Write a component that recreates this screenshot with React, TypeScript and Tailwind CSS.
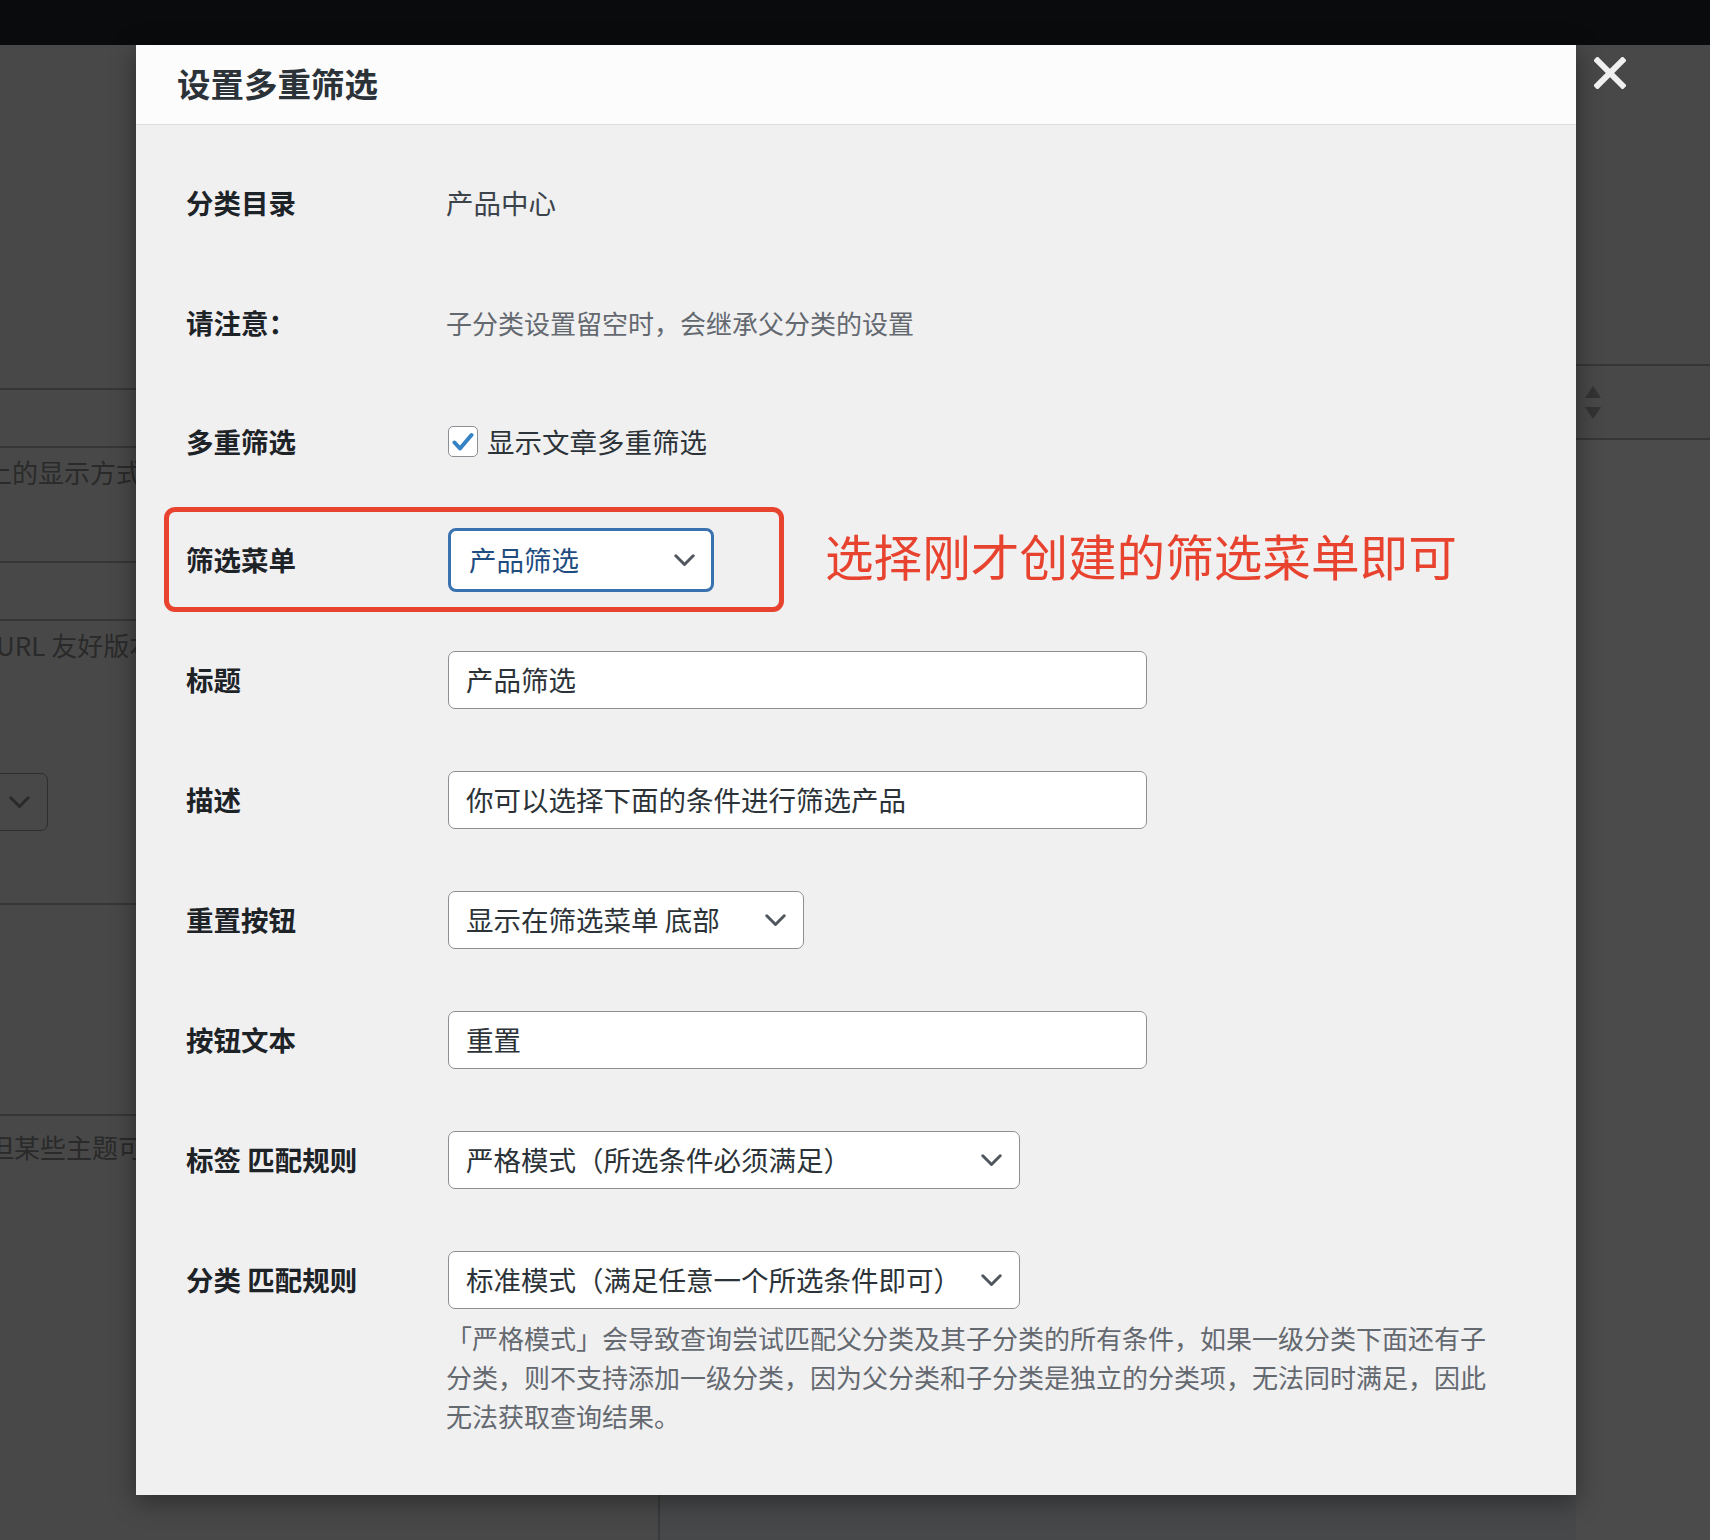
import React from 'react';

function Chevron() {
  return (
    <svg width="21" height="13" viewBox="0 0 21 13" className="shrink-0">
      <path d="M1.8 1.8 L10.5 10.5 L19.2 1.8" fill="none" stroke="#50575e" strokeWidth="3" strokeLinecap="round" strokeLinejoin="round" />
    </svg>
  );
}

function TextInput({ value }: { value: string }) {
  return (
    <div className="w-[699px] h-[58px] flex items-center pl-[17px] bg-white border-[1.5px] border-[#8c8f94] rounded-[7px] text-[27.5px] text-[#2c3338] leading-none">
      {value}
    </div>
  );
}

function Select({ value, width }: { value: string; width: string }) {
  return (
    <div className={`${width} h-[58px] flex items-center justify-between pl-[17px] pr-[17px] bg-white border-[1.5px] border-[#8c8f94] rounded-[7px] text-[27.5px] text-[#2c3338] leading-none`}>
      <span>{value}</span>
      <Chevron />
    </div>
  );
}

function Row({ label, children, h = 'h-[120px]' }: { label: string; children: React.ReactNode; h?: string }) {
  return (
    <div className={`${h} flex items-center px-[50px]`}>
      <div className="w-[262px] shrink-0 text-[27.5px] font-bold text-[#1d2327] leading-none">{label}</div>
      <div className="flex items-center">{children}</div>
    </div>
  );
}

function Line() {
  return <div className="h-[2px] bg-[#363636]" />;
}

export default function App() {
  return (
    <div className="relative w-[1710px] h-[1540px] overflow-hidden bg-[#484848] font-['Noto_Sans_CJK_SC','Noto_Sans',sans-serif]">
      {/* admin bar */}
      <div className="h-[45px] bg-[#0a0b0d]" />

      {/* page behind the overlay */}
      <div className="flex h-[1495px]">
        <div className="w-[136px] shrink-0 overflow-hidden text-[26px] text-[#2a2a2a] whitespace-nowrap">
          <div className="h-[343px]" />
          <Line />
          <div className="h-[56px]" />
          <Line />
          <div className="h-[113px] pt-[6px] leading-[36px]">
            <div className="-ml-[14px]">上的显示方式</div>
          </div>
          <Line />
          <div className="h-[56px]" />
          <Line />
          <div className="h-[282px] pt-[6px] leading-[36px]">
            <div className="-ml-[4px]">URL 友好版本</div>
            <div className="mt-[110px] -ml-[20px] w-[68px] h-[58px] border-[1.5px] border-[#2e2e2e] rounded-[7px] flex items-center justify-end pr-[17px]">
              <svg width="21" height="13" viewBox="0 0 21 13">
                <path d="M1.8 1.8 L10.5 10.5 L19.2 1.8" fill="none" stroke="#2a2a2a" strokeWidth="3" strokeLinecap="round" strokeLinejoin="round" />
              </svg>
            </div>
          </div>
          <Line />
          <div className="h-[209px]" />
          <Line />
          <div className="pt-[13px] leading-[36px]">
            <div className="-ml-[12px]">但某些主题可</div>
          </div>
        </div>

        <div className="flex-1 flex flex-col">
          <div className="h-[1450px] shrink-0" />
          <div className="flex-1 flex">
            <div className="w-[524px] border-r-2 border-[#3a3a3a]" />
            <div className="flex-1 bg-[#474849]" />
          </div>
        </div>

        <div className="w-[134px] shrink-0">
          <div className="h-[319px]" />
          <Line />
          <div className="h-[72px] flex flex-col justify-center gap-[9px] pl-[9px]">
            <svg width="16" height="12" viewBox="0 0 16 12"><path d="M8 0 L16 12 L0 12 Z" fill="#333" /></svg>
            <svg width="16" height="12" viewBox="0 0 16 12"><path d="M0 0 L16 0 L8 12 Z" fill="#333" /></svg>
          </div>
          <Line />
          <div className="h-full bg-[#4a4b4a]" />
        </div>
      </div>

      {/* modal */}
      <div className="absolute left-[136px] top-[45px] w-[1440px] h-[1450px] bg-[#f0f0f1] shadow-[0_6px_24px_rgba(0,0,0,0.4)] flex flex-col">
        <div className="h-[80px] shrink-0 flex items-center px-[41px] pb-[3px] bg-[#fcfcfc] border-b border-[#dcdcde]">
          <h1 className="text-[33.5px] font-bold text-[#2c3338] leading-none">设置多重筛选</h1>
        </div>

        <div className="pt-[18px]">
          <Row label="分类目录">
            <span className="-ml-[2px] text-[27.5px] text-[#3c434a] leading-none">产品中心</span>
          </Row>
          <Row label="请注意：">
            <span className="-ml-[2px] text-[26px] text-[#646970] leading-none">子分类设置留空时，会继承父分类的设置</span>
          </Row>
          <Row label="多重筛选" h="h-[117px]">
            <div className="flex items-center gap-[9px]">
              <div className="w-[30px] h-[31px] bg-white border-[1.5px] border-[#8c8f94] rounded-[5px] flex items-center justify-center">
                <svg width="22" height="20" viewBox="0 0 22 20">
                  <path d="M2.5 10.5 L8 16.5 L19.5 3" fill="none" stroke="#3582c4" strokeWidth="4" strokeLinecap="round" strokeLinejoin="round" />
                </svg>
              </div>
              <span className="text-[27.5px] text-[#2c3338] leading-none">显示文章多重筛选</span>
            </div>
          </Row>

          <div className="relative">
            <div className="absolute left-[28px] top-[7px] w-[620px] h-[105px] border-[5px] border-[#e8432f] rounded-[11px]" />
            <Row label="筛选菜单">
              <div className="w-[266px] h-[64px] flex items-center justify-between pl-[18px] pr-[16px] bg-white border-[3px] border-[#3a72b0] rounded-[8px] text-[27.5px] text-[#1f4d7f] leading-none">
                <span>产品筛选</span>
                <Chevron />
              </div>
              <span className="ml-[111px] pb-[10px] text-[48.6px] text-[#e8432f] leading-none">选择刚才创建的筛选菜单即可</span>
            </Row>
          </div>

          <Row label="标题">
            <TextInput value="产品筛选" />
          </Row>
          <Row label="描述">
            <TextInput value="你可以选择下面的条件进行筛选产品" />
          </Row>
          <Row label="重置按钮">
            <Select value="显示在筛选菜单 底部" width="w-[356px]" />
          </Row>
          <Row label="按钮文本">
            <TextInput value="重置" />
          </Row>
          <Row label="标签 匹配规则">
            <Select value="严格模式（所选条件必须满足）" width="w-[572px]" />
          </Row>

          <div className="flex items-start px-[50px] pt-[31px]">
            <div className="w-[262px] shrink-0 h-[58px] flex items-center text-[27.5px] font-bold text-[#1d2327] leading-none">分类 匹配规则</div>
            <div>
              <Select value="标准模式（满足任意一个所选条件即可）" width="w-[572px]" />
              <div className="mt-[9px] -ml-[2px] text-[26px] leading-[39px] text-[#646970] whitespace-nowrap">
                <div>「严格模式」会导致查询尝试匹配父分类及其子分类的所有条件，如果一级分类下面还有子</div>
                <div>分类，则不支持添加一级分类，因为父分类和子分类是独立的分类项，无法同时满足，因此</div>
                <div>无法获取查询结果。</div>
              </div>
            </div>
          </div>
        </div>
      </div>

      {/* close button */}
      <button className="absolute left-[1594px] top-[57px] w-[32px] h-[32px] flex items-center justify-center">
        <svg width="32" height="32" viewBox="0 0 32 32">
          <path d="M3.5 3.5 L28.5 28.5 M28.5 3.5 L3.5 28.5" stroke="#f0f0f1" strokeWidth="6" strokeLinecap="square" />
        </svg>
      </button>
    </div>
  );
}
